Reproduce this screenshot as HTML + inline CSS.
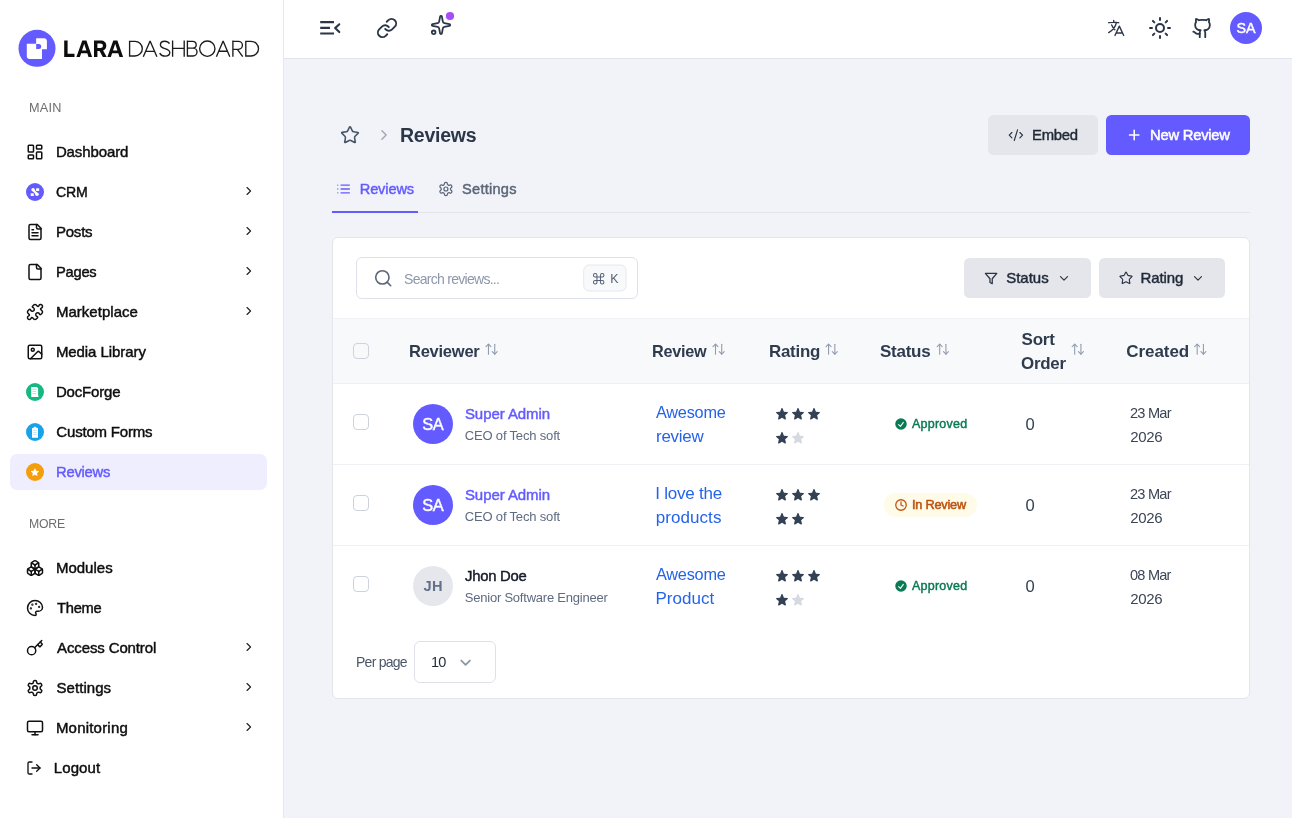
<!DOCTYPE html>
<html lang="en"><head><meta charset="utf-8"><title>Reviews - Lara Dashboard</title>
<style>
html,body{margin:0;padding:0}
body{width:1292px;height:818px;position:relative;overflow:hidden;background:#f1f3f9;font-family:"Liberation Sans",sans-serif;-webkit-font-smoothing:antialiased}
.a{position:absolute;display:block}
.t{position:absolute;white-space:nowrap;margin:0}
</style></head><body><div id="app" style="position:absolute;left:0;top:0;width:1292px;height:818px;overflow:hidden;will-change:transform">
<div class="a" style="left:284px;top:58px;width:1008px;height:760px;background:#f1f3f9;"></div>
<div class="a" style="left:0px;top:0px;width:283px;height:818px;background:#fff;"></div>
<div class="a" style="left:283px;top:0px;width:1px;height:818px;background:#e5e7eb;"></div>
<div class="a" style="left:284px;top:0px;width:1008px;height:58px;background:#fff;"></div>
<div class="a" style="left:284px;top:58px;width:1008px;height:1px;background:#e3e5ec;"></div>
<svg class="a" style="left:14px;top:26px" width="260" height="46" viewBox="14 26 260 46"><circle cx="37" cy="48.3" r="18.5" fill="#635bff"/><path d="M26.8 43.8H42V58.9H29.8a3 3 0 0 1-3-3z" fill="#fff"/><path d="M36.100 38.300H43.900a3 3 0 0 1 3 3V49.300H36.100z" fill="#fff"/><path d="M36.200 43.900h2.500a2.500 2.500 0 0 1 0 5h-2.500z" fill="#635bff"/><g fill="#0d0d0d" fill-rule="evenodd"><path d="M64.200 40.600h3.400v13.100h6.900v3.200H64.200z"/><path d="M76.400 56.900L82.300 40.600h4.100L92.100 56.900h-3.600l-1.200-3.700h-6.200l-1.200 3.700zM82 50.400h4.400l-2.200-6.700z"/><path d="M94 40.600h6.600c3.500 0 5.700 2 5.700 5.100 0 2.300-1.200 3.900-3.200 4.700l3.600 6.500h-3.900l-3.200-6h-2.200v6H94zM97.400 43.600v4.400h3c1.600 0 2.500-.8 2.500-2.200s-.9-2.200-2.500-2.200z"/><path d="M107.400 56.900L113.300 40.600h4.100L123.100 56.900h-3.600l-1.200-3.700h-6.200l-1.200 3.700zM113 50.400h4.400l-2.200-6.700z"/></g><g fill="none" stroke="#1c1c1c" stroke-width="1.350" stroke-linejoin="miter" stroke-linecap="butt"><path d="M129.600 41.300H134.950a7.350 7.350 0 0 1 0 14.700H129.600z"/><path stroke-linejoin="bevel" d="M143.300 56.700L150.100 41.000L156.900 56.700M145.500 51.300H154.700"/><path d="M169.500 43.700C168.500 42.100 166.800 41.200 164.700 41.200C162.200 41.200 160.400 42.700 160.400 44.800C160.400 47.100 162.300 47.900 164.900 48.600C167.700 49.400 169.800 50.300 169.800 52.600C169.800 54.800 167.800 56.100 165.100 56.100C162.600 56.100 160.600 54.900 159.700 53.100"/><path d="M172.600 40.600V56.700M184.200 40.600V56.700M172.600 48.400H184.200"/><path d="M187.400 40.600V56.700M187.400 41.300H192.800a3.400 3.400 0 0 1 0 6.800H187.400M192.800 48.100H193.050a3.950 3.950 0 0 1 0 7.900H187.400"/><circle cx="207.300" cy="48.650" r="7.650"/><path stroke-linejoin="bevel" d="M216.400 56.700L223.100 41.000L229.800 56.700M218.600 51.200H227.600"/><path d="M232.900 40.600V56.700M232.900 41.300H238.400a4 4 0 0 1 0 8H232.900M237.400 49.300L242.700 56.700"/><path d="M245.800 41.300H251.150a7.350 7.350 0 0 1 0 14.700H245.800z"/></g></svg>
<span class="t" style="top:98px;font-size:12.6px;line-height:20px;color:#6e6e6e;left:29.36px;letter-spacing:0.250px;transform:scaleX(1.0075);transform-origin:left center;">MAIN</span>
<div class="a" style="left:10px;top:454px;width:257px;height:36px;background:#efeefe;border-radius:7px;"></div>
<span class="t" style="top:140px;font-size:15px;line-height:23px;color:#0e0e0e;left:55.89px;-webkit-text-stroke:0.45px #0e0e0e;letter-spacing:-0.105px;">Dashboard</span>
<svg class="a" style="left:26px;top:143px;color:#111" width="19" height="19" viewBox="-0.000 -0.000 25.333 25.333" fill="none" stroke="#111" stroke-width="2" stroke-linecap="round" stroke-linejoin="round" ><rect width="7" height="9" x="3" y="3" rx="1"/><rect width="7" height="5" x="14" y="3" rx="1"/><rect width="7" height="9" x="14" y="12" rx="1"/><rect width="7" height="5" x="3" y="16" rx="1"/></svg>
<span class="t" style="top:180px;font-size:15px;line-height:23px;color:#0e0e0e;left:56.40px;-webkit-text-stroke:0.45px #0e0e0e;letter-spacing:-0.250px;transform:scaleX(0.9399);transform-origin:left center;">CRM</span>
<svg class="a" style="left:26px;top:183px" width="18" height="18" viewBox="0 0 18 18"><circle cx="9" cy="9" r="9" fill="#635bff"/><g fill="#fffff6"><rect x="10.100" y="5.200" width="3.100" height="2.900" rx=".5"/><rect x="4.700" y="10.200" width="3.100" height="2.900" rx=".5"/><circle cx="7.050" cy="6.800" r="1.750"/><circle cx="11" cy="11.200" r="1.750"/><path d="M7.050 6.800L11 11.200" stroke="#fffff6" stroke-width="2.200" stroke-linecap="round"/></g></svg>
<svg class="a" style="left:241px;top:184px;color:#222" width="15" height="15" viewBox="-1.371 -0.000 25.714 25.714" fill="none" stroke="#222" stroke-width="2" stroke-linecap="round" stroke-linejoin="round" ><path d="m9 18 6-6-6-6"/></svg>
<span class="t" style="top:220px;font-size:15px;line-height:23px;color:#0e0e0e;left:55.89px;-webkit-text-stroke:0.45px #0e0e0e;letter-spacing:-0.198px;">Posts</span>
<svg class="a" style="left:26px;top:223px;color:#111" width="19" height="19" viewBox="-0.000 -0.000 25.333 25.333" fill="none" stroke="#111" stroke-width="2" stroke-linecap="round" stroke-linejoin="round" ><path d="M15 2H6a2 2 0 0 0-2 2v16a2 2 0 0 0 2 2h12a2 2 0 0 0 2-2V7Z"/><path d="M14 2v4a2 2 0 0 0 2 2h4"/><path d="M10 9H8"/><path d="M16 13H8"/><path d="M16 17H8"/></svg>
<svg class="a" style="left:241px;top:224px;color:#222" width="15" height="15" viewBox="-1.371 -0.000 25.714 25.714" fill="none" stroke="#222" stroke-width="2" stroke-linecap="round" stroke-linejoin="round" ><path d="m9 18 6-6-6-6"/></svg>
<span class="t" style="top:260px;font-size:15px;line-height:23px;color:#0e0e0e;left:55.92px;-webkit-text-stroke:0.45px #0e0e0e;letter-spacing:-0.250px;transform:scaleX(0.9795);transform-origin:left center;">Pages</span>
<svg class="a" style="left:26px;top:263px;color:#111" width="19" height="19" viewBox="-0.000 -0.000 25.333 25.333" fill="none" stroke="#111" stroke-width="2" stroke-linecap="round" stroke-linejoin="round" ><path d="M15 2H6a2 2 0 0 0-2 2v16a2 2 0 0 0 2 2h12a2 2 0 0 0 2-2V7Z"/><path d="M14 2v4a2 2 0 0 0 2 2h4"/></svg>
<svg class="a" style="left:241px;top:264px;color:#222" width="15" height="15" viewBox="-1.371 -0.000 25.714 25.714" fill="none" stroke="#222" stroke-width="2" stroke-linecap="round" stroke-linejoin="round" ><path d="m9 18 6-6-6-6"/></svg>
<span class="t" style="top:300px;font-size:15px;line-height:23px;color:#0e0e0e;left:55.89px;-webkit-text-stroke:0.45px #0e0e0e;letter-spacing:0.034px;">Marketplace</span>
<svg class="a" style="left:26px;top:303px;color:#111" width="19" height="19" viewBox="-0.000 -0.000 25.333 25.333" fill="none" stroke="#111" stroke-width="2" stroke-linecap="round" stroke-linejoin="round" ><path d="M19.439 7.85c-.049.322.059.648.289.878l1.568 1.568c.47.47.706 1.087.706 1.704s-.235 1.233-.706 1.704l-1.611 1.611a.98.98 0 0 1-.837.276c-.47-.07-.802-.48-.968-.925a2.501 2.501 0 1 0-3.214 3.214c.446.166.855.497.925.968a.979.979 0 0 1-.276.837l-1.61 1.61a2.404 2.404 0 0 1-1.705.707 2.402 2.402 0 0 1-1.704-.706l-1.568-1.568a1.026 1.026 0 0 0-.877-.29c-.493.074-.84.504-1.02.968a2.5 2.5 0 1 1-3.237-3.237c.464-.18.894-.527.967-1.02a1.026 1.026 0 0 0-.289-.877l-1.568-1.568A2.402 2.402 0 0 1 1.998 12c0-.617.236-1.234.706-1.704L4.23 8.77c.24-.24.581-.353.917-.303.515.077.877.528 1.073 1.01a2.5 2.5 0 1 0 3.259-3.259c-.482-.196-.933-.558-1.01-1.073-.05-.336.062-.676.303-.917l1.525-1.525A2.402 2.402 0 0 1 12 1.998c.617 0 1.234.236 1.704.706l1.568 1.568c.23.23.556.338.877.29.493-.074.84-.504 1.02-.968a2.5 2.5 0 1 1 3.237 3.237c-.464.18-.894.527-.967 1.02Z"/></svg>
<svg class="a" style="left:241px;top:304px;color:#222" width="15" height="15" viewBox="-1.371 -0.000 25.714 25.714" fill="none" stroke="#222" stroke-width="2" stroke-linecap="round" stroke-linejoin="round" ><path d="m9 18 6-6-6-6"/></svg>
<span class="t" style="top:340px;font-size:15px;line-height:23px;color:#0e0e0e;left:55.89px;-webkit-text-stroke:0.45px #0e0e0e;letter-spacing:-0.072px;">Media Library</span>
<svg class="a" style="left:26px;top:343px;color:#111" width="19" height="19" viewBox="-0.000 -0.000 25.333 25.333" fill="none" stroke="#111" stroke-width="2" stroke-linecap="round" stroke-linejoin="round" ><rect width="18" height="18" x="3" y="3" rx="2" ry="2"/><circle cx="9" cy="9" r="2"/><path d="m21 15-3.086-3.086a2 2 0 0 0-2.828 0L6 21"/></svg>
<span class="t" style="top:380px;font-size:15px;line-height:23px;color:#0e0e0e;left:55.89px;-webkit-text-stroke:0.45px #0e0e0e;letter-spacing:-0.173px;">DocForge</span>
<svg class="a" style="left:26px;top:383px" width="18" height="18" viewBox="0 0 18 18"><circle cx="9" cy="9" r="9" fill="#14b981"/><path d="M5.200 4h5.600l1.300 1.300v7.200l.7.700-.7.700h-6.900z" fill="#fff"/><path d="M6.400 6.300h3.800M6.400 8.400h3.800M6.400 10.500h3.800" stroke="#a7ead0" stroke-width="1"/></svg>
<span class="t" style="top:420px;font-size:15px;line-height:23px;color:#0e0e0e;left:56.36px;-webkit-text-stroke:0.45px #0e0e0e;letter-spacing:-0.199px;">Custom Forms</span>
<svg class="a" style="left:26px;top:423px" width="18" height="18" viewBox="0 0 18 18"><circle cx="9" cy="9" r="9" fill="#16a3e9"/><path d="M6 5.300l1.500-.6.700-.900h1.600l.7.900 1.500.6v9.400h-6z" fill="#fff"/><path d="M7.200 7.400h3.600M7.200 9.500h3.600M7.200 11.600h3.600" stroke="#bfe4f9" stroke-width=".9"/></svg>
<span class="t" style="top:460px;font-size:15px;line-height:23px;color:#635bff;left:55.91px;-webkit-text-stroke:0.45px #635bff;letter-spacing:-0.250px;transform:scaleX(0.9858);transform-origin:left center;">Reviews</span>
<svg class="a" style="left:26px;top:463px" width="18" height="18" viewBox="0 0 18 18"><circle cx="9" cy="9" r="9" fill="#f59e0b"/><g transform="translate(4.200 4.300) scale(.47)" fill="#fff"><path d="M10.868 2.884c-.321-.772-1.415-.772-1.736 0l-1.830 4.401-4.753.381c-.833.067-1.171 1.107-.536 1.651l3.620 3.102-1.106 4.637c-.194.813.691 1.456 1.405 1.020L10 15.591l4.069 2.485c.713.436 1.598-.207 1.404-1.020l-1.106-4.637 3.620-3.102c.635-.544.297-1.584-.536-1.650l-4.752-.382-1.831-4.401z"/></g></svg>
<span class="t" style="top:514px;font-size:12.6px;line-height:20px;color:#6e6e6e;left:29.29px;letter-spacing:-0.250px;transform:scaleX(0.9759);transform-origin:left center;">MORE</span>
<span class="t" style="top:556px;font-size:15px;line-height:23px;color:#0e0e0e;left:55.89px;-webkit-text-stroke:0.45px #0e0e0e;letter-spacing:0.020px;">Modules</span>
<svg class="a" style="left:26px;top:559px;color:#111" width="19" height="19" viewBox="-0.000 -0.000 25.333 25.333" fill="none" stroke="#111" stroke-width="2" stroke-linecap="round" stroke-linejoin="round" ><path d="M2.97 12.92A2 2 0 0 0 2 14.63v3.24a2 2 0 0 0 .97 1.71l3 1.8a2 2 0 0 0 2.06 0L12 19v-5.5l-5-3-4.03 2.42Z"/><path d="m7 16.5-4.74-2.85"/><path d="m7 16.5 5-3"/><path d="M7 16.5v5.17"/><path d="M12 13.5V19l3.97 2.38a2 2 0 0 0 2.06 0l3-1.8a2 2 0 0 0 .97-1.71v-3.24a2 2 0 0 0-.97-1.71L17 10.5l-5 3Z"/><path d="m17 16.5-5-3"/><path d="m17 16.5 4.74-2.85"/><path d="M17 16.5v5.17"/><path d="M7.97 4.42A2 2 0 0 0 7 6.13v4.37l5 3 5-3V6.13a2 2 0 0 0-.97-1.71l-3-1.8a2 2 0 0 0-2.06 0l-3 1.8Z"/><path d="M12 8 7.26 5.15"/><path d="m12 8 4.74-2.85"/><path d="M12 13.5V8"/></svg>
<span class="t" style="top:596px;font-size:15px;line-height:23px;color:#0e0e0e;left:56.79px;-webkit-text-stroke:0.45px #0e0e0e;letter-spacing:-0.250px;transform:scaleX(0.9793);transform-origin:left center;">Theme</span>
<svg class="a" style="left:26px;top:599px;color:#111" width="19" height="19" viewBox="-0.000 -0.000 25.333 25.333" fill="none" stroke="#111" stroke-width="2" stroke-linecap="round" stroke-linejoin="round" ><circle cx="13.5" cy="6.5" r=".5" fill="currentColor"/><circle cx="17.5" cy="10.5" r=".5" fill="currentColor"/><circle cx="8.5" cy="7.5" r=".5" fill="currentColor"/><circle cx="6.5" cy="12.5" r=".5" fill="currentColor"/><path d="M12 2C6.5 2 2 6.5 2 12s4.5 10 10 10c.926 0 1.648-.746 1.648-1.688 0-.437-.18-.835-.437-1.125-.29-.289-.438-.652-.438-1.125a1.64 1.64 0 0 1 1.668-1.668h1.996c3.051 0 5.555-2.503 5.555-5.554C21.965 6.012 17.461 2 12 2z"/></svg>
<span class="t" style="top:636px;font-size:15px;line-height:23px;color:#0e0e0e;left:57.10px;-webkit-text-stroke:0.45px #0e0e0e;letter-spacing:-0.130px;">Access Control</span>
<svg class="a" style="left:26px;top:639px;color:#111" width="19" height="19" viewBox="-0.000 -0.000 25.333 25.333" fill="none" stroke="#111" stroke-width="2" stroke-linecap="round" stroke-linejoin="round" ><path d="m15.5 7.5 2.3 2.3a1 1 0 0 0 1.4 0l2.1-2.1a1 1 0 0 0 0-1.4L19 4"/><path d="m21 2-9.6 9.6"/><circle cx="7.5" cy="15.5" r="5.5"/></svg>
<svg class="a" style="left:241px;top:640px;color:#222" width="15" height="15" viewBox="-1.371 -0.000 25.714 25.714" fill="none" stroke="#222" stroke-width="2" stroke-linecap="round" stroke-linejoin="round" ><path d="m9 18 6-6-6-6"/></svg>
<span class="t" style="top:676px;font-size:15px;line-height:23px;color:#0e0e0e;left:56.44px;-webkit-text-stroke:0.45px #0e0e0e;letter-spacing:0.067px;">Settings</span>
<svg class="a" style="left:26px;top:679px;color:#111" width="19" height="19" viewBox="-0.000 -0.000 25.333 25.333" fill="none" stroke="#111" stroke-width="2" stroke-linecap="round" stroke-linejoin="round" ><path d="M12.22 2h-.44a2 2 0 0 0-2 2v.18a2 2 0 0 1-1 1.73l-.43.25a2 2 0 0 1-2 0l-.15-.08a2 2 0 0 0-2.73.73l-.22.38a2 2 0 0 0 .73 2.73l.15.1a2 2 0 0 1 1 1.72v.51a2 2 0 0 1-1 1.74l-.15.09a2 2 0 0 0-.73 2.73l.22.38a2 2 0 0 0 2.73.73l.15-.08a2 2 0 0 1 2 0l.43.25a2 2 0 0 1 1 1.73V20a2 2 0 0 0 2 2h.44a2 2 0 0 0 2-2v-.18a2 2 0 0 1 1-1.73l.43-.25a2 2 0 0 1 2 0l.15.08a2 2 0 0 0 2.73-.73l.22-.39a2 2 0 0 0-.73-2.73l-.15-.08a2 2 0 0 1-1-1.74v-.5a2 2 0 0 1 1-1.74l.15-.09a2 2 0 0 0 .73-2.73l-.22-.38a2 2 0 0 0-2.73-.73l-.15.08a2 2 0 0 1-2 0l-.43-.25a2 2 0 0 1-1-1.73V4a2 2 0 0 0-2-2z"/><circle cx="12" cy="12" r="3"/></svg>
<svg class="a" style="left:241px;top:680px;color:#222" width="15" height="15" viewBox="-1.371 -0.000 25.714 25.714" fill="none" stroke="#222" stroke-width="2" stroke-linecap="round" stroke-linejoin="round" ><path d="m9 18 6-6-6-6"/></svg>
<span class="t" style="top:716px;font-size:15px;line-height:23px;color:#0e0e0e;left:55.89px;-webkit-text-stroke:0.45px #0e0e0e;letter-spacing:0.211px;">Monitoring</span>
<svg class="a" style="left:26px;top:719px;color:#111" width="19" height="19" viewBox="-0.000 -0.000 25.333 25.333" fill="none" stroke="#111" stroke-width="2" stroke-linecap="round" stroke-linejoin="round" ><rect width="20" height="14" x="2" y="3" rx="2"/><line x1="8" x2="16" y1="21" y2="21"/><line x1="12" x2="12" y1="17" y2="21"/></svg>
<svg class="a" style="left:241px;top:720px;color:#222" width="15" height="15" viewBox="-1.371 -0.000 25.714 25.714" fill="none" stroke="#222" stroke-width="2" stroke-linecap="round" stroke-linejoin="round" ><path d="m9 18 6-6-6-6"/></svg>
<span class="t" style="top:756px;font-size:15px;line-height:23px;color:#0e0e0e;left:53.79px;-webkit-text-stroke:0.45px #0e0e0e;letter-spacing:0.100px;">Logout</span>
<svg class="a" style="left:26px;top:760px;color:#111" width="17" height="17" viewBox="-0.000 -0.000 25.500 25.500" fill="none" stroke="#111" stroke-width="2" stroke-linecap="round" stroke-linejoin="round" ><path d="M9 21H5a2 2 0 0 1-2-2V5a2 2 0 0 1 2-2h4"/><polyline points="16 17 21 12 16 7"/><line x1="21" x2="9" y1="12" y2="12"/></svg>
<svg class="a" style="left:318px;top:16px" width="24" height="24" viewBox="0 0 24 24" fill="none" stroke="#2b3648" stroke-width="2.100" stroke-linecap="butt" stroke-linejoin="miter"><path d="M2.200 6.100h13.800M2.200 11.900h9.800M2.200 17.500h13.800"/><path d="M21.300 8.300l-4.200 3.800 4.200 4" stroke-linecap="round" stroke-linejoin="round"/></svg>
<svg class="a" style="left:376px;top:17px;color:#2b3648" width="23" height="23" viewBox="-0.000 -0.000 25.091 25.091" fill="none" stroke="#2b3648" stroke-width="2.1" stroke-linecap="round" stroke-linejoin="round" ><path d="M10 13a5 5 0 0 0 7.54.54l3-3a5 5 0 0 0-7.07-7.07l-1.72 1.71"/><path d="M14 11a5 5 0 0 0-7.54-.54l-3 3a5 5 0 0 0 7.07 7.07l1.71-1.71"/></svg>
<svg class="a" style="left:430px;top:14px;color:#2b3648" width="23" height="23" viewBox="-0.000 -0.000 25.091 25.091" fill="none" stroke="#2b3648" stroke-width="1.95" stroke-linecap="round" stroke-linejoin="round" ><path d="M11.017 2.814a1 1 0 0 1 1.966 0l1.051 5.558a2 2 0 0 0 1.594 1.594l5.558 1.051a1 1 0 0 1 0 1.966l-5.558 1.051a2 2 0 0 0-1.594 1.594l-1.051 5.558a1 1 0 0 1-1.966 0l-1.051-5.558a2 2 0 0 0-1.594-1.594l-5.558-1.051a1 1 0 0 1 0-1.966l5.558-1.051a2 2 0 0 0 1.594-1.594z"/><path d="M20 2v4"/><path d="M22 4h-4"/><circle cx="4" cy="20" r="2"/></svg>
<svg class="a" style="left:440px;top:6px" width="20" height="20" viewBox="440 6 20 20"><circle cx="450" cy="16" r="5" fill="#fff"/><circle cx="450" cy="16" r="4.100" fill="#a64df7"/></svg>
<svg class="a" style="left:1106px;top:18px;color:#2b3648" width="21" height="21" viewBox="-0.240 -0.000 25.200 25.200" fill="none" stroke="#2b3648" stroke-width="1.65" stroke-linecap="round" stroke-linejoin="round" ><path d="M10.500 21l5.250-11.250L21 21m-9-3h7.500M3 5.621a48.474 48.474 0 016-.371m0 0c1.120 0 2.233.038 3.334.114M9 5.250V3m3.334 2.364C11.176 10.658 7.690 15.080 3 17.502m9.334-12.138c.896.061 1.785.147 2.666.257m-4.589 8.495a18.023 18.023 0 01-3.827-5.802"/></svg>
<svg class="a" style="left:1148px;top:16px;color:#2b3648" width="25" height="25" viewBox="-0.000 -0.000 25.000 25.000" fill="none" stroke="#2b3648" stroke-width="2" stroke-linecap="round" stroke-linejoin="round" ><circle cx="12" cy="12" r="4"/><path d="M12 2v2"/><path d="M12 20v2"/><path d="m4.93 4.93 1.41 1.41"/><path d="m17.66 17.66 1.41 1.41"/><path d="M2 12h2"/><path d="M20 12h2"/><path d="m6.34 17.66-1.41 1.41"/><path d="m19.07 4.930-1.410 1.410"/></svg>
<svg class="a" style="left:1191px;top:17px;color:#2b3648" width="23" height="23" viewBox="-0.545 -0.000 25.091 25.091" fill="none" stroke="#2b3648" stroke-width="2" stroke-linecap="round" stroke-linejoin="round" ><path d="M15 22v-4a4.800 4.800 0 0 0-1-3.500c3 0 6-2 6-5.500.08-1.250-.27-2.480-1-3.500.28-1.150.28-2.350 0-3.500 0 0-1 0-3 1.500-2.640-.500-5.360-.500-8 0C6 2 5 2 5 2c-.3 1.150-.3 2.350 0 3.500A5.403 5.403 0 0 0 4 9c0 3.500 3 5.500 6 5.500-.39.490-.68 1.050-.85 1.650-.17.600-.22 1.230-.15 1.850v4"/><path d="M9 18c-4.510 2-5-2-7-2"/></svg>
<div class="a" style="left:1230px;top:12px;width:32px;height:32px;background:#635bff;border-radius:16px;"></div>
<span class="t" style="top:17px;font-size:14.6px;line-height:22px;color:#fff;left:1146.00px;width:200px;text-align:center;-webkit-text-stroke:0.45px #fff;letter-spacing:-0.250px;text-indent:-0.250px;transform:scaleX(0.9801);transform-origin:center center;">SA</span>
<svg class="a" style="left:340px;top:125px;color:#475569" width="21" height="21" viewBox="-0.000 -0.000 25.200 25.200" fill="none" stroke="#475569" stroke-width="1.9" stroke-linecap="round" stroke-linejoin="round" ><path d="M11.525 2.295a.53.53 0 0 1 .95 0l2.310 4.679a2.123 2.123 0 0 0 1.595 1.160l5.166.756a.53.53 0 0 1 .294.904l-3.736 3.638a2.123 2.123 0 0 0-.611 1.878l.882 5.140a.53.53 0 0 1-.771.560l-4.618-2.428a2.122 2.122 0 0 0-1.973 0L6.396 21.010a.53.53 0 0 1-.770-.560l.881-5.139a2.122 2.122 0 0 0-.611-1.879L2.160 9.795a.53.53 0 0 1 .294-.906l5.165-.755a2.122 2.122 0 0 0 1.597-1.160z"/></svg>
<svg class="a" style="left:375px;top:126px;color:#9aa3b2" width="18" height="18" viewBox="-0.706 -0.706 25.412 25.412" fill="none" stroke="#9aa3b2" stroke-width="1.8" stroke-linecap="round" stroke-linejoin="round" ><path d="m9 18 6-6-6-6"/></svg>
<span class="t" style="top:121px;font-size:20px;line-height:28px;color:#2b3649;left:399.90px;font-weight:700;letter-spacing:-0.250px;transform:scaleX(0.9751);transform-origin:left center;">Reviews</span>
<div class="a" style="left:988px;top:115px;width:110px;height:40px;background:#e5e6eb;border-radius:5.5px;"></div>
<svg class="a" style="left:1007px;top:127px;color:#2a3444" width="17" height="17" viewBox="-1.350 -0.300 25.500 25.500" fill="none" stroke="#2a3444" stroke-width="1.75" stroke-linecap="round" stroke-linejoin="round" ><path d="m18 16 4-4-4-4"/><path d="m6 8-4 4 4 4"/><path d="m14.500 4-5 16"/></svg>
<span class="t" style="top:123px;font-size:15px;line-height:23px;color:#1f2937;left:1032.10px;-webkit-text-stroke:0.45px #1f2937;letter-spacing:-0.250px;transform:scaleX(0.9914);transform-origin:left center;">Embed</span>
<div class="a" style="left:1106px;top:115px;width:144px;height:40px;background:#635bff;border-radius:5.5px;"></div>
<svg class="a" style="left:1126px;top:127px;color:#fff" width="17" height="17" viewBox="-0.300 -0.000 25.500 25.500" fill="none" stroke="#fff" stroke-width="2.3" stroke-linecap="round" stroke-linejoin="round" ><path d="M5 12h14"/><path d="M12 5v14"/></svg>
<span class="t" style="top:123px;font-size:15px;line-height:23px;color:#fff;left:1149.63px;-webkit-text-stroke:0.5px #fff;letter-spacing:-0.250px;transform:scaleX(0.9861);transform-origin:left center;">New Review</span>
<div class="a" style="left:332px;top:212px;width:918px;height:1px;background:#e3e5ec;"></div>
<div class="a" style="left:332px;top:211px;width:86px;height:2px;background:#635bff;"></div>
<svg class="a" style="left:335px;top:181px;color:#635bff" width="17" height="17" viewBox="-1.316 -0.387 26.323 26.323" fill="none" stroke="#635bff" stroke-width="2" stroke-linecap="round" stroke-linejoin="round" ><path d="M3 12h.01"/><path d="M3 18h.01"/><path d="M3 6h.01"/><path d="M8 12h13"/><path d="M8 18h13"/><path d="M8 6h13"/></svg>
<span class="t" style="top:178px;font-size:14.6px;line-height:22px;color:#635bff;left:359.73px;-webkit-text-stroke:0.45px #635bff;letter-spacing:-0.130px;">Reviews</span>
<svg class="a" style="left:437px;top:181px;color:#5b6678" width="17" height="17" viewBox="-1.350 -0.000 25.500 25.500" fill="none" stroke="#5b6678" stroke-width="1.85" stroke-linecap="round" stroke-linejoin="round" ><path d="M12.22 2h-.44a2 2 0 0 0-2 2v.18a2 2 0 0 1-1 1.73l-.43.25a2 2 0 0 1-2 0l-.15-.08a2 2 0 0 0-2.73.73l-.22.38a2 2 0 0 0 .73 2.73l.15.1a2 2 0 0 1 1 1.72v.51a2 2 0 0 1-1 1.74l-.15.09a2 2 0 0 0-.73 2.73l.22.38a2 2 0 0 0 2.73.73l.15-.08a2 2 0 0 1 2 0l.43.25a2 2 0 0 1 1 1.73V20a2 2 0 0 0 2 2h.44a2 2 0 0 0 2-2v-.18a2 2 0 0 1 1-1.73l.43-.25a2 2 0 0 1 2 0l.15.08a2 2 0 0 0 2.73-.73l.22-.39a2 2 0 0 0-.73-2.73l-.15-.08a2 2 0 0 1-1-1.74v-.5a2 2 0 0 1 1-1.74l.15-.09a2 2 0 0 0 .73-2.73l-.22-.38a2 2 0 0 0-2.73-.73l-.15.08a2 2 0 0 1-2 0l-.43-.25a2 2 0 0 1-1-1.73V4a2 2 0 0 0-2-2z"/><circle cx="12" cy="12" r="3"/></svg>
<span class="t" style="top:178px;font-size:14.6px;line-height:22px;color:#5b6678;left:462.06px;-webkit-text-stroke:0.45px #5b6678;letter-spacing:0.250px;">Settings</span>
<div class="a" style="left:332px;top:237px;width:918px;height:462px;background:#fff;border:1px solid #e4e6ee;box-sizing:border-box;border-radius:6px;"></div>
<div class="a" style="left:356px;top:257px;width:282px;height:42px;background:#fff;border:1px solid #dfe1ea;box-sizing:border-box;border-radius:6px;"></div>
<svg class="a" style="left:373px;top:268px;color:#5b6678" width="21" height="21" viewBox="-0.240 -0.240 25.200 25.200" fill="none" stroke="#5b6678" stroke-width="1.9" stroke-linecap="round" stroke-linejoin="round" ><circle cx="11" cy="11" r="8"/><path d="m21 21-4.300-4.300"/></svg>
<span class="t" style="top:267px;font-size:15px;line-height:23px;color:#8e98ab;left:404.36px;letter-spacing:-0.800px;transform:scaleX(0.9382);transform-origin:left center;">Search reviews...</span>
<svg class="a" style="left:580px;top:260px" width="52" height="36" viewBox="580 260 52 36"><rect x="583.700" y="265" width="42.400" height="26" rx="5.500" fill="#f8f9fb" stroke="#e6e8ee" stroke-width="1"/></svg>
<svg class="a" style="left:591px;top:271px" width="15" height="15" viewBox="-1.200 -1.200 25.714 25.714" fill="none" stroke="#566176" stroke-width="1.750" stroke-linecap="round" stroke-linejoin="round"><path d="M15 6v12a3 3 0 1 0 3-3H6a3 3 0 1 0 3 3V6a3 3 0 1 0-3 3h12a3 3 0 1 0-3-3"/></svg>
<span class="t" style="top:269px;font-size:12.4px;line-height:20px;color:#566176;left:610.28px;">K</span>
<div class="a" style="left:964px;top:258px;width:127px;height:40px;background:#e5e6eb;border-radius:5.5px;"></div>
<svg class="a" style="left:984px;top:271px;color:#2a3444" width="15" height="15" viewBox="-0.438 -1.139 26.277 26.277" fill="none" stroke="#2a3444" stroke-width="2.2" stroke-linecap="round" stroke-linejoin="round" ><polygon points="22 3 2 3 10 12.46 10 19 14 21 14 12.46 22 3"/></svg>
<span class="t" style="top:266px;font-size:15px;line-height:23px;color:#1f2937;left:1006.14px;-webkit-text-stroke:0.45px #1f2937;letter-spacing:0.008px;">Status</span>
<svg class="a" style="left:1057px;top:271px;color:#2a3444" width="15" height="15" viewBox="-0.000 -0.514 25.714 25.714" fill="none" stroke="#2a3444" stroke-width="2" stroke-linecap="round" stroke-linejoin="round" ><path d="m6 9 6 6 6-6"/></svg>
<div class="a" style="left:1099px;top:258px;width:126px;height:40px;background:#e5e6eb;border-radius:5.5px;"></div>
<svg class="a" style="left:1118px;top:270px;color:#2a3444" width="16" height="16" viewBox="-1.241 -1.241 26.483 26.483" fill="none" stroke="#2a3444" stroke-width="1.9" stroke-linecap="round" stroke-linejoin="round" ><path d="M11.525 2.295a.53.53 0 0 1 .95 0l2.310 4.679a2.123 2.123 0 0 0 1.595 1.160l5.166.756a.53.53 0 0 1 .294.904l-3.736 3.638a2.123 2.123 0 0 0-.611 1.878l.882 5.140a.53.53 0 0 1-.771.560l-4.618-2.428a2.122 2.122 0 0 0-1.973 0L6.396 21.010a.53.53 0 0 1-.770-.560l.881-5.139a2.122 2.122 0 0 0-.611-1.879L2.160 9.795a.53.53 0 0 1 .294-.906l5.165-.755a2.122 2.122 0 0 0 1.597-1.160z"/></svg>
<span class="t" style="top:266px;font-size:15px;line-height:23px;color:#1f2937;left:1140.49px;-webkit-text-stroke:0.45px #1f2937;letter-spacing:-0.082px;">Rating</span>
<svg class="a" style="left:1191px;top:271px;color:#2a3444" width="15" height="15" viewBox="-0.000 -0.514 25.714 25.714" fill="none" stroke="#2a3444" stroke-width="2" stroke-linecap="round" stroke-linejoin="round" ><path d="m6 9 6 6 6-6"/></svg>
<div class="a" style="left:333px;top:318px;width:916px;height:66px;background:#f8f9fb;border-top:1px solid #f1f2f6;border-bottom:1px solid #eef0f4;box-sizing:border-box;"></div>
<div class="a" style="left:353px;top:343px;width:16px;height:16px;background:#f8f9fb;border:1px solid #cdd2dc;box-sizing:border-box;border-radius:4px;"></div>
<span class="t" style="top:339px;font-size:17px;line-height:25px;color:#2f3b4f;left:408.50px;font-weight:700;letter-spacing:-0.250px;transform:scaleX(0.9703);transform-origin:left center;">Reviewer</span>
<svg class="a" style="left:484px;top:341px;color:#929cae" width="16" height="16" viewBox="-0.160 -1.120 25.600 25.600" fill="none" stroke="#929cae" stroke-width="1.75" stroke-linecap="round" stroke-linejoin="round" ><path d="m21 16-4 4-4-4"/><path d="M17 20V4"/><path d="m3 8 4-4 4 4"/><path d="M7 4v16"/></svg>
<span class="t" style="top:339px;font-size:17px;line-height:25px;color:#2f3b4f;left:651.71px;font-weight:700;letter-spacing:-0.250px;transform:scaleX(0.9548);transform-origin:left center;">Review</span>
<svg class="a" style="left:711px;top:341px;color:#929cae" width="16" height="16" viewBox="-0.160 -1.120 25.600 25.600" fill="none" stroke="#929cae" stroke-width="1.75" stroke-linecap="round" stroke-linejoin="round" ><path d="m21 16-4 4-4-4"/><path d="M17 20V4"/><path d="m3 8 4-4 4 4"/><path d="M7 4v16"/></svg>
<span class="t" style="top:339px;font-size:17px;line-height:25px;color:#2f3b4f;left:769.07px;font-weight:700;letter-spacing:-0.250px;transform:scaleX(0.9946);transform-origin:left center;">Rating</span>
<svg class="a" style="left:824px;top:341px;color:#929cae" width="16" height="16" viewBox="-0.320 -1.120 25.600 25.600" fill="none" stroke="#929cae" stroke-width="1.75" stroke-linecap="round" stroke-linejoin="round" ><path d="m21 16-4 4-4-4"/><path d="M17 20V4"/><path d="m3 8 4-4 4 4"/><path d="M7 4v16"/></svg>
<span class="t" style="top:339px;font-size:17px;line-height:25px;color:#2f3b4f;left:880.01px;font-weight:700;letter-spacing:-0.250px;">Status</span>
<svg class="a" style="left:935px;top:341px;color:#929cae" width="16" height="16" viewBox="-0.480 -1.120 25.600 25.600" fill="none" stroke="#929cae" stroke-width="1.75" stroke-linecap="round" stroke-linejoin="round" ><path d="m21 16-4 4-4-4"/><path d="M17 20V4"/><path d="m3 8 4-4 4 4"/><path d="M7 4v16"/></svg>
<span class="t" style="top:327px;font-size:17px;line-height:25px;color:#2f3b4f;left:1021.61px;font-weight:700;letter-spacing:-0.250px;">Sort</span>
<span class="t" style="top:351px;font-size:17px;line-height:25px;color:#2f3b4f;left:1021.41px;font-weight:700;letter-spacing:-0.250px;transform:scaleX(0.9945);transform-origin:left center;">Order</span>
<svg class="a" style="left:1070px;top:341px;color:#929cae" width="16" height="16" viewBox="-0.480 -1.120 25.600 25.600" fill="none" stroke="#929cae" stroke-width="1.75" stroke-linecap="round" stroke-linejoin="round" ><path d="m21 16-4 4-4-4"/><path d="M17 20V4"/><path d="m3 8 4-4 4 4"/><path d="M7 4v16"/></svg>
<span class="t" style="top:339px;font-size:17px;line-height:25px;color:#2f3b4f;left:1126.30px;font-weight:700;letter-spacing:-0.066px;">Created</span>
<svg class="a" style="left:1192px;top:341px;color:#929cae" width="16" height="16" viewBox="-1.280 -1.120 25.600 25.600" fill="none" stroke="#929cae" stroke-width="1.75" stroke-linecap="round" stroke-linejoin="round" ><path d="m21 16-4 4-4-4"/><path d="M17 20V4"/><path d="m3 8 4-4 4 4"/><path d="M7 4v16"/></svg>
<div class="a" style="left:333px;top:464px;width:916px;height:1px;background:#eef0f4;"></div>
<div class="a" style="left:353px;top:414px;width:16px;height:16px;background:#fff;border:1px solid #cdd2dc;box-sizing:border-box;border-radius:4px;"></div>
<div class="a" style="left:413px;top:404px;width:40px;height:40px;background:#635bff;border-radius:20px;"></div>
<span class="t" style="top:412px;font-size:17px;line-height:25px;color:#fff;left:333.00px;width:200px;text-align:center;-webkit-text-stroke:0.45px #fff;letter-spacing:-0.250px;text-indent:-0.250px;transform:scaleX(0.9646);transform-origin:center center;">SA</span>
<span class="t" style="top:402px;font-size:15px;line-height:23px;color:#635bff;left:464.94px;-webkit-text-stroke:0.45px #635bff;letter-spacing:-0.069px;">Super Admin</span>
<span class="t" style="top:425px;font-size:13px;line-height:21px;color:#5f6b80;left:464.74px;letter-spacing:-0.172px;">CEO of Tech soft</span>
<span class="t" style="top:400px;font-size:17px;line-height:25px;color:#2563eb;left:656.17px;letter-spacing:-0.250px;transform:scaleX(0.9590);transform-origin:left center;">Awesome</span>
<span class="t" style="top:424px;font-size:17px;line-height:25px;color:#2563eb;left:655.68px;letter-spacing:-0.250px;transform:scaleX(0.9960);transform-origin:left center;">review</span>
<svg class="a" style="left:774px;top:406px" width="16" height="16" viewBox="-1.111 -0.556 22.222 22.222" fill="#334155"><path d="M10.868 2.884c-.321-.772-1.415-.772-1.736 0l-1.830 4.401-4.753.381c-.833.067-1.171 1.107-.536 1.651l3.620 3.102-1.106 4.637c-.194.813.691 1.456 1.405 1.020L10 15.591l4.069 2.485c.713.436 1.598-.207 1.404-1.020l-1.106-4.637 3.620-3.102c.635-.544.297-1.584-.536-1.650l-4.752-.382-1.831-4.401z"/></svg>
<svg class="a" style="left:790px;top:406px" width="16" height="16" viewBox="-1.111 -0.556 22.222 22.222" fill="#334155"><path d="M10.868 2.884c-.321-.772-1.415-.772-1.736 0l-1.830 4.401-4.753.381c-.833.067-1.171 1.107-.536 1.651l3.620 3.102-1.106 4.637c-.194.813.691 1.456 1.405 1.020L10 15.591l4.069 2.485c.713.436 1.598-.207 1.404-1.020l-1.106-4.637 3.620-3.102c.635-.544.297-1.584-.536-1.650l-4.752-.382-1.831-4.401z"/></svg>
<svg class="a" style="left:806px;top:406px" width="16" height="16" viewBox="-1.111 -0.556 22.222 22.222" fill="#334155"><path d="M10.868 2.884c-.321-.772-1.415-.772-1.736 0l-1.830 4.401-4.753.381c-.833.067-1.171 1.107-.536 1.651l3.620 3.102-1.106 4.637c-.194.813.691 1.456 1.405 1.020L10 15.591l4.069 2.485c.713.436 1.598-.207 1.404-1.020l-1.106-4.637 3.620-3.102c.635-.544.297-1.584-.536-1.650l-4.752-.382-1.831-4.401z"/></svg>
<svg class="a" style="left:774px;top:430px" width="16" height="16" viewBox="-1.111 -0.556 22.222 22.222" fill="#334155"><path d="M10.868 2.884c-.321-.772-1.415-.772-1.736 0l-1.830 4.401-4.753.381c-.833.067-1.171 1.107-.536 1.651l3.620 3.102-1.106 4.637c-.194.813.691 1.456 1.405 1.020L10 15.591l4.069 2.485c.713.436 1.598-.207 1.404-1.020l-1.106-4.637 3.620-3.102c.635-.544.297-1.584-.536-1.650l-4.752-.382-1.831-4.401z"/></svg>
<svg class="a" style="left:790px;top:430px" width="16" height="16" viewBox="-1.111 -0.556 22.222 22.222" fill="#d5d9e0"><path d="M10.868 2.884c-.321-.772-1.415-.772-1.736 0l-1.830 4.401-4.753.381c-.833.067-1.171 1.107-.536 1.651l3.620 3.102-1.106 4.637c-.194.813.691 1.456 1.405 1.020L10 15.591l4.069 2.485c.713.436 1.598-.207 1.404-1.020l-1.106-4.637 3.620-3.102c.635-.544.297-1.584-.536-1.650l-4.752-.382-1.831-4.401z"/></svg>
<svg class="a" style="left:893px;top:416px" width="16" height="16" viewBox="-1.111 -1.111 22.222 22.222" fill="#0a7a55"><path fill-rule="evenodd" d="M10 18a8 8 0 100-16 8 8 0 000 16zm3.857-9.809a.75.75 0 00-1.214-.882l-3.483 4.790-1.880-1.880a.75.75 0 10-1.060 1.061l2.500 2.500a.75.75 0 001.137-.089l4-5.500z" clip-rule="evenodd"/></svg>
<span class="t" style="top:414px;font-size:12.4px;line-height:20px;color:#0a7a55;left:912.40px;-webkit-text-stroke:0.45px #0a7a55;letter-spacing:0.250px;transform:scaleX(1.0069);transform-origin:left center;">Approved</span>
<span class="t" style="top:412px;font-size:16.6px;line-height:25px;color:#334155;left:1025.55px;">0</span>
<span class="t" style="top:401px;font-size:15px;line-height:23px;color:#3b4556;left:1130.17px;letter-spacing:-0.800px;transform:scaleX(0.9740);transform-origin:left center;">23 Mar</span>
<span class="t" style="top:425px;font-size:15px;line-height:23px;color:#3b4556;left:1130.15px;letter-spacing:-0.287px;">2026</span>
<div class="a" style="left:333px;top:545px;width:916px;height:1px;background:#eef0f4;"></div>
<div class="a" style="left:353px;top:495px;width:16px;height:16px;background:#fff;border:1px solid #cdd2dc;box-sizing:border-box;border-radius:4px;"></div>
<div class="a" style="left:413px;top:485px;width:40px;height:40px;background:#635bff;border-radius:20px;"></div>
<span class="t" style="top:493px;font-size:17px;line-height:25px;color:#fff;left:333.00px;width:200px;text-align:center;-webkit-text-stroke:0.45px #fff;letter-spacing:-0.250px;text-indent:-0.250px;transform:scaleX(0.9646);transform-origin:center center;">SA</span>
<span class="t" style="top:483px;font-size:15px;line-height:23px;color:#635bff;left:464.94px;-webkit-text-stroke:0.45px #635bff;letter-spacing:-0.069px;">Super Admin</span>
<span class="t" style="top:506px;font-size:13px;line-height:21px;color:#5f6b80;left:464.74px;letter-spacing:-0.172px;">CEO of Tech soft</span>
<span class="t" style="top:481px;font-size:17px;line-height:25px;color:#2563eb;left:655.23px;letter-spacing:-0.220px;">I love the</span>
<span class="t" style="top:505px;font-size:17px;line-height:25px;color:#2563eb;left:655.70px;letter-spacing:0.072px;">products</span>
<svg class="a" style="left:774px;top:487px" width="16" height="16" viewBox="-1.111 -0.556 22.222 22.222" fill="#334155"><path d="M10.868 2.884c-.321-.772-1.415-.772-1.736 0l-1.830 4.401-4.753.381c-.833.067-1.171 1.107-.536 1.651l3.620 3.102-1.106 4.637c-.194.813.691 1.456 1.405 1.020L10 15.591l4.069 2.485c.713.436 1.598-.207 1.404-1.020l-1.106-4.637 3.620-3.102c.635-.544.297-1.584-.536-1.650l-4.752-.382-1.831-4.401z"/></svg>
<svg class="a" style="left:790px;top:487px" width="16" height="16" viewBox="-1.111 -0.556 22.222 22.222" fill="#334155"><path d="M10.868 2.884c-.321-.772-1.415-.772-1.736 0l-1.830 4.401-4.753.381c-.833.067-1.171 1.107-.536 1.651l3.620 3.102-1.106 4.637c-.194.813.691 1.456 1.405 1.020L10 15.591l4.069 2.485c.713.436 1.598-.207 1.404-1.020l-1.106-4.637 3.620-3.102c.635-.544.297-1.584-.536-1.650l-4.752-.382-1.831-4.401z"/></svg>
<svg class="a" style="left:806px;top:487px" width="16" height="16" viewBox="-1.111 -0.556 22.222 22.222" fill="#334155"><path d="M10.868 2.884c-.321-.772-1.415-.772-1.736 0l-1.830 4.401-4.753.381c-.833.067-1.171 1.107-.536 1.651l3.620 3.102-1.106 4.637c-.194.813.691 1.456 1.405 1.020L10 15.591l4.069 2.485c.713.436 1.598-.207 1.404-1.020l-1.106-4.637 3.620-3.102c.635-.544.297-1.584-.536-1.650l-4.752-.382-1.831-4.401z"/></svg>
<svg class="a" style="left:774px;top:511px" width="16" height="16" viewBox="-1.111 -0.556 22.222 22.222" fill="#334155"><path d="M10.868 2.884c-.321-.772-1.415-.772-1.736 0l-1.830 4.401-4.753.381c-.833.067-1.171 1.107-.536 1.651l3.620 3.102-1.106 4.637c-.194.813.691 1.456 1.405 1.020L10 15.591l4.069 2.485c.713.436 1.598-.207 1.404-1.020l-1.106-4.637 3.620-3.102c.635-.544.297-1.584-.536-1.650l-4.752-.382-1.831-4.401z"/></svg>
<svg class="a" style="left:790px;top:511px" width="16" height="16" viewBox="-1.111 -0.556 22.222 22.222" fill="#334155"><path d="M10.868 2.884c-.321-.772-1.415-.772-1.736 0l-1.830 4.401-4.753.381c-.833.067-1.171 1.107-.536 1.651l3.620 3.102-1.106 4.637c-.194.813.691 1.456 1.405 1.020L10 15.591l4.069 2.485c.713.436 1.598-.207 1.404-1.020l-1.106-4.637 3.620-3.102c.635-.544.297-1.584-.536-1.650l-4.752-.382-1.831-4.401z"/></svg>
<div class="a" style="left:884px;top:493px;width:93px;height:24px;background:#fefbe9;border-radius:12px;"></div>
<svg class="a" style="left:894px;top:498px;color:#c0530f" width="14" height="14" viewBox="-1.333 -1.333 26.667 26.667" fill="none" stroke="#c0530f" stroke-width="2.4" stroke-linecap="round" stroke-linejoin="round" ><circle cx="12" cy="12" r="10"/><polyline points="12 6 12 12 16 14"/></svg>
<span class="t" style="top:495px;font-size:12.7px;line-height:20px;color:#c0530f;left:911.90px;-webkit-text-stroke:0.55px #c0530f;letter-spacing:-0.191px;">In Review</span>
<span class="t" style="top:493px;font-size:16.6px;line-height:25px;color:#334155;left:1025.55px;">0</span>
<span class="t" style="top:482px;font-size:15px;line-height:23px;color:#3b4556;left:1130.17px;letter-spacing:-0.800px;transform:scaleX(0.9740);transform-origin:left center;">23 Mar</span>
<span class="t" style="top:506px;font-size:15px;line-height:23px;color:#3b4556;left:1130.15px;letter-spacing:-0.287px;">2026</span>
<div class="a" style="left:353px;top:576px;width:16px;height:16px;background:#fff;border:1px solid #cdd2dc;box-sizing:border-box;border-radius:4px;"></div>
<div class="a" style="left:413px;top:566px;width:40px;height:40px;background:#e5e7ec;border-radius:20px;"></div>
<span class="t" style="top:575px;font-size:14.6px;line-height:22px;color:#64708a;left:333.00px;width:200px;text-align:center;font-weight:700;letter-spacing:0.249px;text-indent:0.249px;">JH</span>
<span class="t" style="top:564px;font-size:15px;line-height:23px;color:#141b29;left:465.39px;-webkit-text-stroke:0.45px #141b29;letter-spacing:-0.250px;transform:scaleX(0.9900);transform-origin:left center;">Jhon Doe</span>
<span class="t" style="top:587px;font-size:13px;line-height:21px;color:#5f6b80;left:464.81px;letter-spacing:-0.224px;">Senior Software Engineer</span>
<span class="t" style="top:562px;font-size:17px;line-height:25px;color:#2563eb;left:656.17px;letter-spacing:-0.250px;transform:scaleX(0.9590);transform-origin:left center;">Awesome</span>
<span class="t" style="top:586px;font-size:17px;line-height:25px;color:#2563eb;left:655.41px;letter-spacing:0.038px;">Product</span>
<svg class="a" style="left:774px;top:568px" width="16" height="16" viewBox="-1.111 -0.556 22.222 22.222" fill="#334155"><path d="M10.868 2.884c-.321-.772-1.415-.772-1.736 0l-1.830 4.401-4.753.381c-.833.067-1.171 1.107-.536 1.651l3.620 3.102-1.106 4.637c-.194.813.691 1.456 1.405 1.020L10 15.591l4.069 2.485c.713.436 1.598-.207 1.404-1.020l-1.106-4.637 3.620-3.102c.635-.544.297-1.584-.536-1.650l-4.752-.382-1.831-4.401z"/></svg>
<svg class="a" style="left:790px;top:568px" width="16" height="16" viewBox="-1.111 -0.556 22.222 22.222" fill="#334155"><path d="M10.868 2.884c-.321-.772-1.415-.772-1.736 0l-1.830 4.401-4.753.381c-.833.067-1.171 1.107-.536 1.651l3.620 3.102-1.106 4.637c-.194.813.691 1.456 1.405 1.020L10 15.591l4.069 2.485c.713.436 1.598-.207 1.404-1.020l-1.106-4.637 3.620-3.102c.635-.544.297-1.584-.536-1.650l-4.752-.382-1.831-4.401z"/></svg>
<svg class="a" style="left:806px;top:568px" width="16" height="16" viewBox="-1.111 -0.556 22.222 22.222" fill="#334155"><path d="M10.868 2.884c-.321-.772-1.415-.772-1.736 0l-1.830 4.401-4.753.381c-.833.067-1.171 1.107-.536 1.651l3.620 3.102-1.106 4.637c-.194.813.691 1.456 1.405 1.020L10 15.591l4.069 2.485c.713.436 1.598-.207 1.404-1.020l-1.106-4.637 3.620-3.102c.635-.544.297-1.584-.536-1.650l-4.752-.382-1.831-4.401z"/></svg>
<svg class="a" style="left:774px;top:592px" width="16" height="16" viewBox="-1.111 -0.556 22.222 22.222" fill="#334155"><path d="M10.868 2.884c-.321-.772-1.415-.772-1.736 0l-1.830 4.401-4.753.381c-.833.067-1.171 1.107-.536 1.651l3.620 3.102-1.106 4.637c-.194.813.691 1.456 1.405 1.020L10 15.591l4.069 2.485c.713.436 1.598-.207 1.404-1.020l-1.106-4.637 3.620-3.102c.635-.544.297-1.584-.536-1.650l-4.752-.382-1.831-4.401z"/></svg>
<svg class="a" style="left:790px;top:592px" width="16" height="16" viewBox="-1.111 -0.556 22.222 22.222" fill="#d5d9e0"><path d="M10.868 2.884c-.321-.772-1.415-.772-1.736 0l-1.830 4.401-4.753.381c-.833.067-1.171 1.107-.536 1.651l3.620 3.102-1.106 4.637c-.194.813.691 1.456 1.405 1.020L10 15.591l4.069 2.485c.713.436 1.598-.207 1.404-1.020l-1.106-4.637 3.620-3.102c.635-.544.297-1.584-.536-1.650l-4.752-.382-1.831-4.401z"/></svg>
<svg class="a" style="left:893px;top:578px" width="16" height="16" viewBox="-1.111 -1.111 22.222 22.222" fill="#0a7a55"><path fill-rule="evenodd" d="M10 18a8 8 0 100-16 8 8 0 000 16zm3.857-9.809a.75.75 0 00-1.214-.882l-3.483 4.790-1.880-1.880a.75.75 0 10-1.060 1.061l2.500 2.500a.75.75 0 001.137-.089l4-5.500z" clip-rule="evenodd"/></svg>
<span class="t" style="top:576px;font-size:12.4px;line-height:20px;color:#0a7a55;left:912.40px;-webkit-text-stroke:0.45px #0a7a55;letter-spacing:0.250px;transform:scaleX(1.0069);transform-origin:left center;">Approved</span>
<span class="t" style="top:574px;font-size:16.6px;line-height:25px;color:#334155;left:1025.55px;">0</span>
<span class="t" style="top:563px;font-size:15px;line-height:23px;color:#3b4556;left:1130.33px;letter-spacing:-0.800px;transform:scaleX(0.9701);transform-origin:left center;">08 Mar</span>
<span class="t" style="top:587px;font-size:15px;line-height:23px;color:#3b4556;left:1130.15px;letter-spacing:-0.287px;">2026</span>
<span class="t" style="top:650px;font-size:15px;line-height:23px;color:#4b5669;left:356.35px;letter-spacing:-0.800px;transform:scaleX(0.9346);transform-origin:left center;">Per page</span>
<div class="a" style="left:414px;top:641px;width:82px;height:42px;background:#fff;border:1px solid #dfe1ea;box-sizing:border-box;border-radius:6px;"></div>
<span class="t" style="top:650px;font-size:15px;line-height:23px;color:#1f2937;left:430.69px;letter-spacing:-0.800px;transform:scaleX(0.9676);transform-origin:left center;">10</span>
<svg class="a" style="left:457px;top:654px;color:#8e98ab" width="18" height="18" viewBox="-0.141 -0.282 25.412 25.412" fill="none" stroke="#8e98ab" stroke-width="2.6" stroke-linecap="round" stroke-linejoin="round" ><path d="m6 9 6 6 6-6"/></svg>
</div></body></html>
